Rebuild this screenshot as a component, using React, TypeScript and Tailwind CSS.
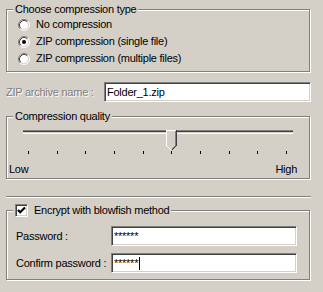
import type { ReactNode } from 'react';

// ============================================================================
// Classic Win9x-style controls
// ============================================================================

function GroupBox({ legend, className = '', children }: { legend: ReactNode; className?: string; children: ReactNode }) {
  return (
    <fieldset
      className={`ml-[6px] w-[304px] border border-[#808080] shadow-[inset_1px_1px_0_#fff,1px_1px_0_#fff] ${className}`}
    >
      <legend className="ml-[6px] px-[2px] h-[14px] leading-[14px] bg-[#d4d0c8]">{legend}</legend>
      {children}
    </fieldset>
  );
}

function Radio({ checked }: { checked?: boolean }) {
  return (
    <svg width="12" height="12" viewBox="0 0 12 12" className="shrink-0">
      <circle cx="6" cy="6" r="5" fill="#fff" />
      <path d="M2.11 9.89 A5.5 5.5 0 0 1 9.89 2.11" stroke="#808080" fill="none" />
      <path d="M9.89 2.11 A5.5 5.5 0 0 1 2.11 9.89" stroke="#fff" fill="none" />
      <path d="M2.82 9.18 A4.5 4.5 0 0 1 9.18 2.82" stroke="#404040" fill="none" />
      <path d="M9.18 2.82 A4.5 4.5 0 0 1 2.82 9.18" stroke="#d4d0c8" fill="none" />
      {checked && <circle cx="6" cy="6" r="2" fill="#000" />}
    </svg>
  );
}

function RadioRow({ label, checked }: { label: string; checked?: boolean }) {
  return (
    <div className="h-[17px] flex items-center pl-[11px] gap-[6px]">
      <Radio checked={checked} />
      <span>{label}</span>
    </div>
  );
}

function Checkbox() {
  return (
    <span className="w-[13px] h-[13px] shrink-0 bg-white border border-t-[#808080] border-l-[#808080] border-r-white border-b-white shadow-[inset_1px_1px_0_#404040,inset_-1px_-1px_0_#d4d0c8] flex items-center justify-center">
      <svg width="9" height="9" viewBox="0 0 9 9">
        <path d="M1 4 L3.2 6.3 L8 1.5" stroke="#000" strokeWidth="2.2" fill="none" />
      </svg>
    </span>
  );
}

function Edit({ className = '', value, caret }: { className?: string; value?: string; caret?: boolean }) {
  return (
    <div
      className={`h-[20px] bg-white border border-t-[#808080] border-l-[#808080] border-r-white border-b-white shadow-[inset_1px_1px_0_#404040,inset_-1px_-1px_0_#d4d0c8] flex items-center pl-[2px] ${className}`}
    >
      <span>{value}</span>
      {caret && <span className="ml-px w-px h-[13px] bg-black" />}
    </div>
  );
}

function TrackThumb() {
  return (
    <svg width="11" height="21" viewBox="0 0 11 21" className="absolute left-[143px] top-0" shapeRendering="crispEdges">
      <path d="M0 0 H11 V16 L5.5 21 L0 16 Z" fill="#d4d0c8" />
      <path d="M0.5 15.5 V0.5 H9.5" stroke="#fff" fill="none" />
      <path d="M10.5 0 V15.5 L5.5 20.5" stroke="#404040" fill="none" />
      <path d="M9.5 1 V15.5 L5.5 19.5" stroke="#808080" fill="none" />
      <path d="M0.5 15.5 L5 20" stroke="#fff" fill="none" />
    </svg>
  );
}

function PasswordRow({ label, caret, className = '' }: { label: string; caret?: boolean; className?: string }) {
  return (
    <div className={`flex items-center pl-[9px] ${className}`}>
      <span className="w-[95px]">{label}</span>
      <Edit className="w-[186px]" value="******" caret={caret} />
    </div>
  );
}

// ============================================================================
// Page
// ============================================================================

export default function App() {
  const ticks = Array.from({ length: 10 });

  return (
    <div className="w-[323px] h-[292px] overflow-hidden bg-[#d4d0c8] pt-[2px] text-[11px] leading-[13px] tracking-[-0.25px] text-black font-['Liberation_Sans',Arial,sans-serif]">
      {/* Compression type */}
      <GroupBox legend="Choose compression type">
        <div className="flex flex-col pb-[4px]">
          <RadioRow label="No compression" />
          <RadioRow label="ZIP compression (single file)" checked />
          <RadioRow label="ZIP compression (multiple files)" />
        </div>
      </GroupBox>

      {/* Archive name (disabled label) */}
      <div className="mt-[10px] flex items-center">
        <span className="ml-[6px] w-[98px] text-[#808080] [text-shadow:1px_1px_0_#fff]">ZIP archive name :</span>
        <Edit className="w-[207px]" value="Folder_1.zip" />
      </div>

      {/* Quality slider */}
      <GroupBox legend="Compression quality" className="mt-[7px]">
        <div className="relative h-[21px] mt-[6px] mx-[16px]">
          <div className="mt-[7px] h-[4px] border-t border-t-[#808080] border-b border-b-white shadow-[inset_0_1px_0_#404040]" />
          <TrackThumb />
        </div>
        <div className="flex justify-between ml-[21px] mr-[22px] h-[3px]">
          {ticks.map((_, i) => (
            <span key={i} className="w-px h-[3px] bg-black" />
          ))}
        </div>
        <div className="flex justify-between mt-[9px] pl-[2px] pr-[12px] pb-[2px]">
          <span>Low</span>
          <span>High</span>
        </div>
      </GroupBox>

      <div className="mt-[17px] ml-[6px] w-[305px] border-t border-t-[#808080] border-b border-b-white" />

      {/* Encryption */}
      <GroupBox
        className="mt-[5px]"
        legend={
          <span className="flex items-center gap-[6px] h-[14px]">
            <Checkbox />
            <span>Encrypt with blowfish method</span>
          </span>
        }
      >
        <div className="pt-[9px] pb-[6px]">
          <PasswordRow label="Password :" />
          <PasswordRow label="Confirm password :" caret className="mt-[7px]" />
        </div>
      </GroupBox>
    </div>
  );
}
